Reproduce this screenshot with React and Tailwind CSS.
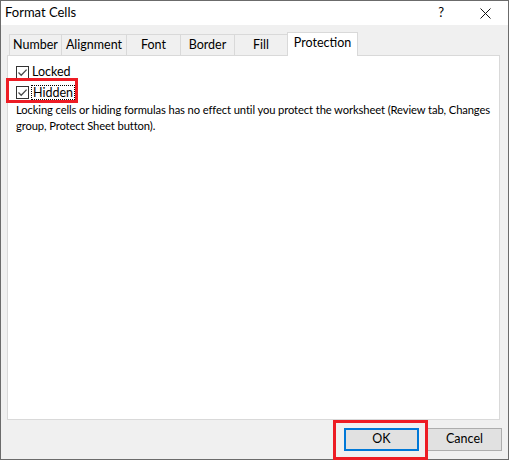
import React from "react";

const F = { fontFamily: 'Lato, "Noto Sans", Arial, sans-serif' };

function Check() {
  return (
    <span className="w-[13px] h-[13px] border border-[#333333] bg-white flex items-center justify-center shrink-0">
      <svg width="11" height="11" viewBox="0 0 11 11">
        <path d="M1.5 5.5 L4.2 8.2 L9.6 2.6" fill="none" stroke="#4a4a4a" strokeWidth="1.3" />
      </svg>
    </span>
  );
}

export default function App() {
  const tabs = [
    ["Number", "w-[52px]"],
    ["Alignment", "w-[65px]"],
    ["Font", "w-[54px]"],
    ["Border", "w-[54px]"],
    ["Fill", "w-[53px]"],
  ];
  return (
    <div
      className="w-[509px] h-[460px] border border-[#6b6b6b] bg-[#f0f0f0] flex flex-col text-[12.5px] text-black relative"
      style={F}
    >
      <div className="h-[24px] bg-white flex items-center pl-[4px] shrink-0">
        <span className="text-[13px]">Format Cells</span>
        <span className="ml-auto mr-[36px] text-[13px]">?</span>
        <svg width="11" height="11" viewBox="0 0 11 11" className="mr-[17px]">
          <path d="M0.5 0.5 L10.5 10.5 M10.5 0.5 L0.5 10.5" stroke="#111" strokeWidth="1" />
        </svg>
      </div>
      <div className="flex items-end h-[23px] mt-[7px] pl-[8px] shrink-0">
        {tabs.map(([t, w]) => (
          <div
            key={t}
            className={`${w} h-[21px] border-t border-l border-[#d9d9d9] bg-[#f0f0f0] flex items-center justify-center`}
          >
            {t}
          </div>
        ))}
        <div className="w-[71px] h-[24px] -mb-px relative z-10 border-t border-l border-r border-[#d9d9d9] bg-white flex items-center justify-center pb-[2px]">
          Protection
        </div>
      </div>
      <div className="flex-1 ml-[6px] mr-[8px] border border-[#d9d9d9] bg-white pt-[7px] pl-[8px]">
        <div className="flex items-center h-[19px]">
          <Check />
          <span className="ml-[3px]">Locked</span>
        </div>
        <div className="flex items-center h-[20px]">
          <Check />
          <span className="ml-[2px] px-px border border-dotted border-black leading-[13px] h-[15px]">Hidden</span>
        </div>
        <p className="leading-[16px] text-[11.2px] tracking-[-0.1px]">
          Locking cells or hiding formulas has no effect until you protect the worksheet (Review tab, Changes group, Protect Sheet button).
        </p>
      </div>
      <div className="h-[39px] shrink-0 flex justify-end items-start pt-[8px] pr-[6px] gap-[8px]">
        <button className="w-[75px] h-[23px] border-2 border-[#0078d7] bg-[#e1e1e1] text-[12.5px] flex items-center justify-center" style={F}>
          OK
        </button>
        <button className="w-[75px] h-[23px] border border-[#adadad] bg-[#e1e1e1] text-[12.5px] flex items-center justify-center" style={F}>
          Cancel
        </button>
      </div>
      <div className="absolute left-[5px] top-[77px] w-[72px] h-[25px] border-[3px] border-[#ed1c24] pointer-events-none" />
      <div className="absolute left-[332px] top-[419px] w-[95px] h-[40px] border-[3px] border-[#ed1c24] pointer-events-none" />
    </div>
  );
}
